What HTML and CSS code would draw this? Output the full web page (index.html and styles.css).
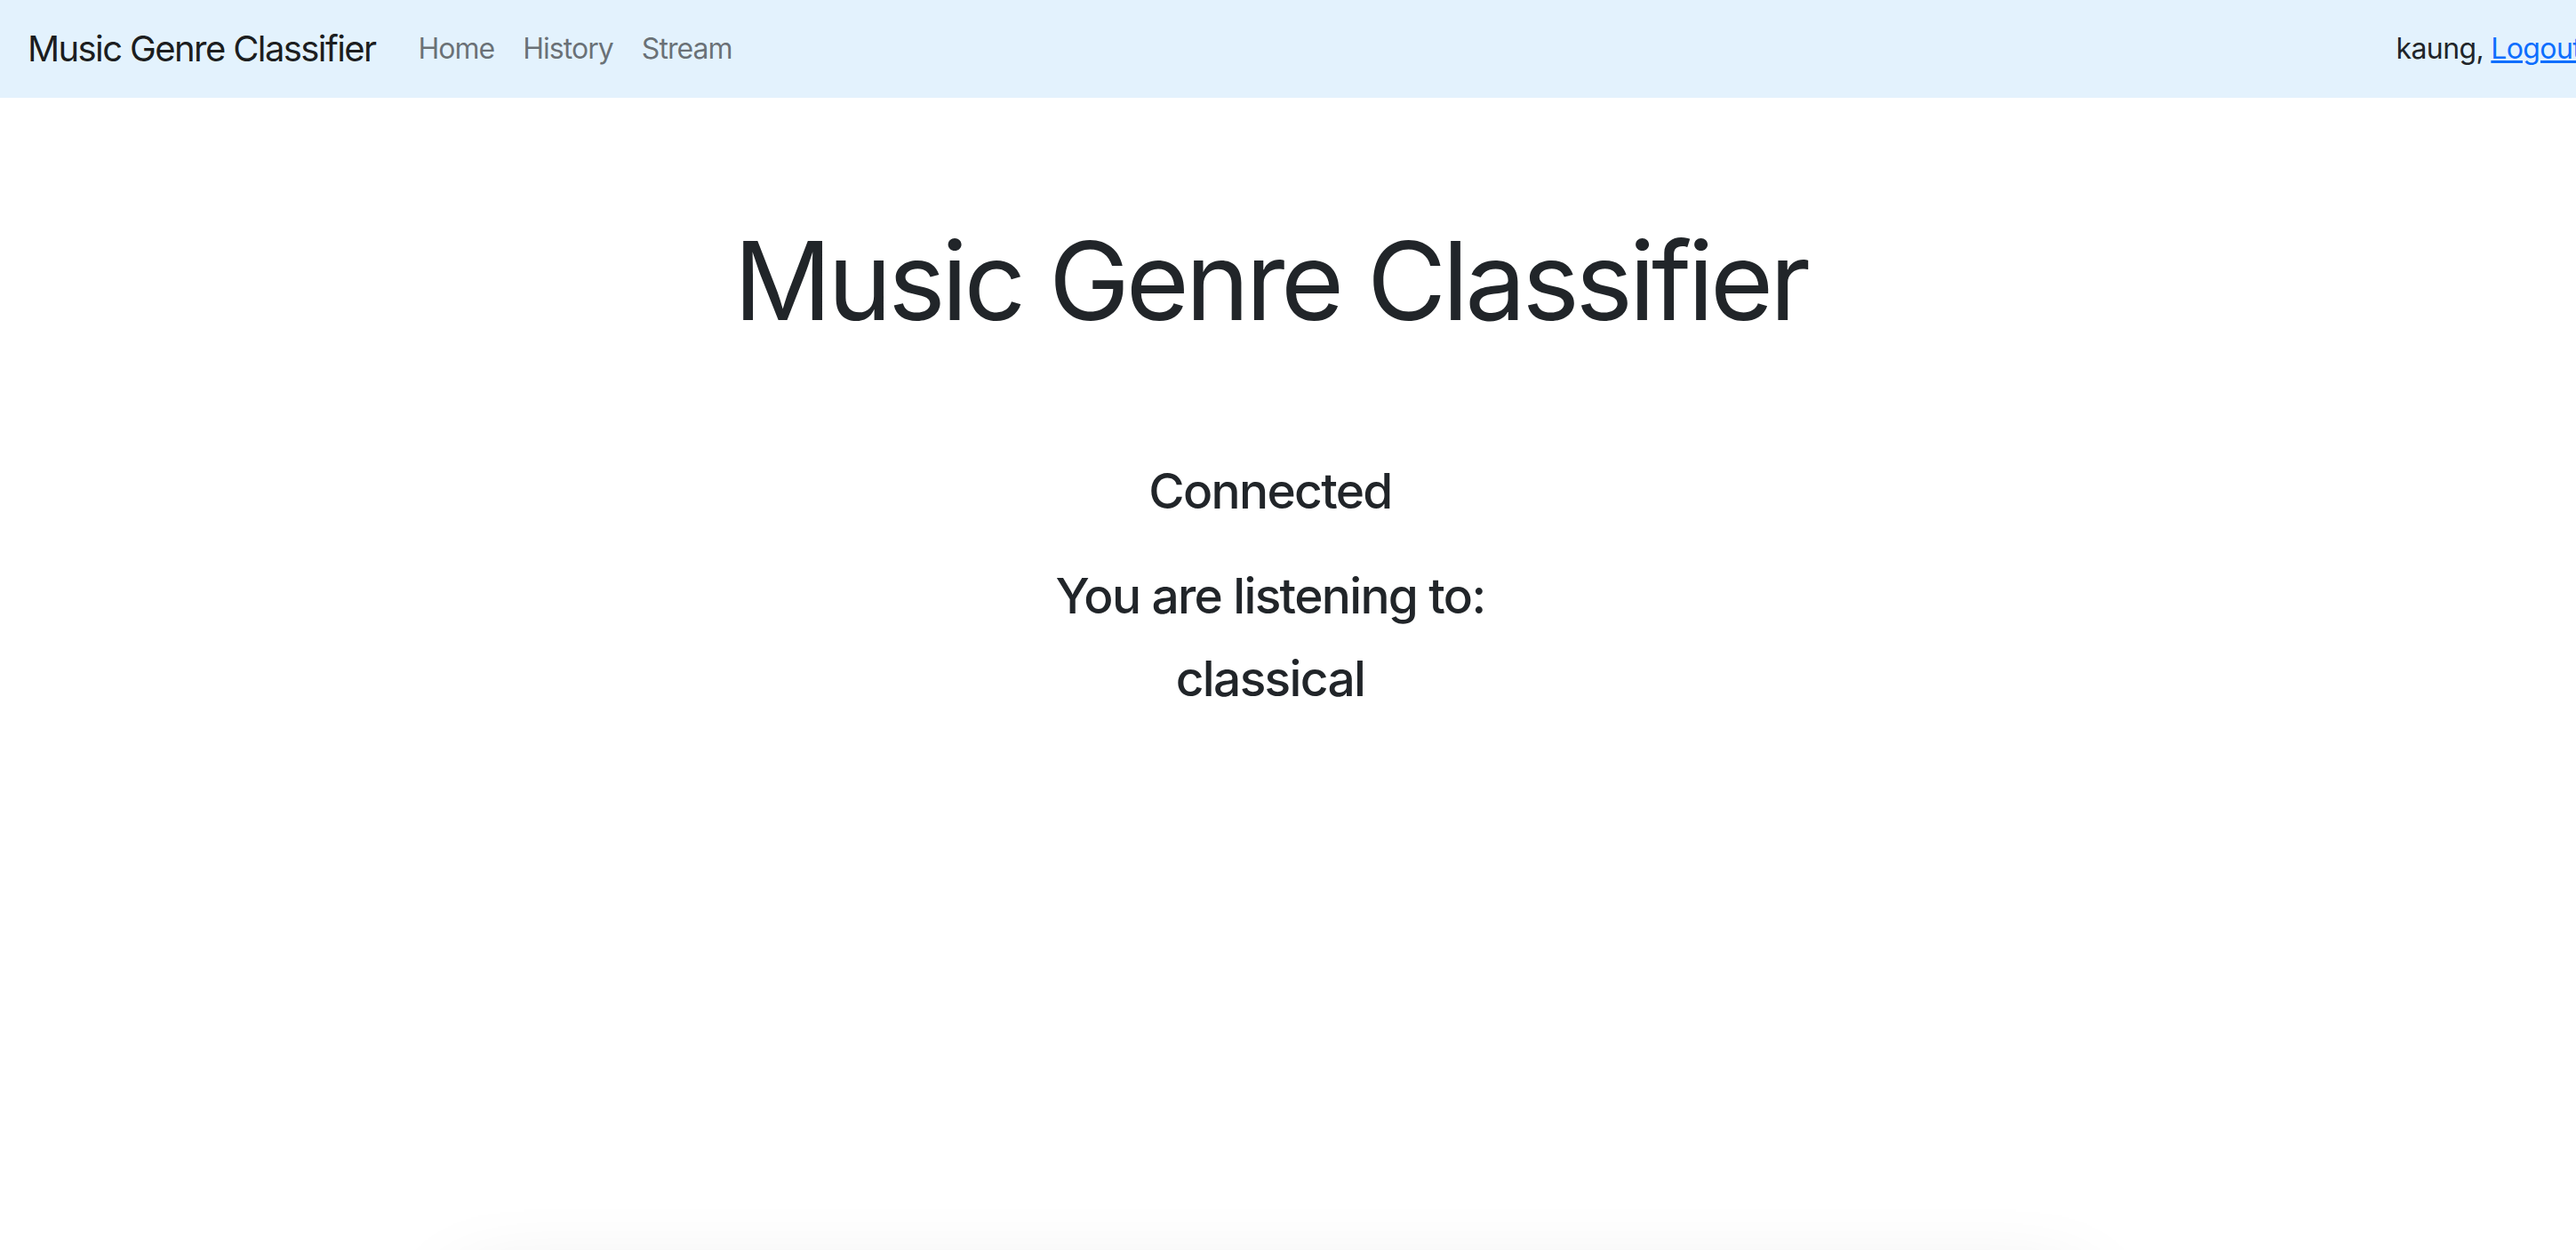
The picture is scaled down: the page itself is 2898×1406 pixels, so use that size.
FILE: index.html
```html
<!DOCTYPE html>
<html lang="en">
<head>
<meta charset="utf-8">
<title>Music Genre Classifier</title>
<link rel="stylesheet" href="styles.css">
</head>
<body>
<nav class="navbar">
  <a class="brand" href="#">Music Genre Classifier</a>
  <ul class="nav-links">
    <li><a class="nav-link" href="#">Home</a></li>
    <li><a class="nav-link" href="#">History</a></li>
    <li><a class="nav-link" href="#">Stream</a></li>
  </ul>
  <div class="user">kaung, <a class="logout" href="#">Logout</a></div>
</nav>
<main class="main">
  <h1 class="title">Music Genre Classifier</h1>
  <h3 class="status">Connected</h3>
  <h3 class="listening">You are listening to:</h3>
  <h3 class="genre">classical</h3>
  <div class="card"></div>
</main>
</body>
</html>
```

FILE: styles.css
```css
html, body {
  margin: 0;
  padding: 0;
  background: #ffffff;
  overflow-x: hidden;
}
body {
  font-family: Inter, "Noto Sans", "Liberation Sans", sans-serif;
  color: #212529;
}
.navbar {
  display: flex;
  align-items: center;
  box-sizing: border-box;
  height: 110px;
  padding: 0 0 0 31px;
  background: #e3f2fd;
  overflow: hidden;
}
.brand {
  font-size: 40px;
  line-height: 60px;
  letter-spacing: -0.04em;
  color: rgba(0, 0, 0, 0.9);
  text-decoration: none;
  margin-right: 32px;
  white-space: nowrap;
}
.nav-links {
  display: flex;
  list-style: none;
  margin: 0;
  padding: 0;
}
.nav-link {
  display: block;
  font-size: 32px;
  line-height: 48px;
  letter-spacing: -0.03em;
  padding: 0 16px;
  color: rgba(0, 0, 0, 0.55);
  text-decoration: none;
}
.user {
  margin-left: auto;
  margin-right: -6px;
  font-size: 32px;
  line-height: 48px;
  letter-spacing: -0.02em;
  color: #212529;
  white-space: nowrap;
  flex-shrink: 0;
}
.logout {
  color: #0d6efd;
  text-decoration: underline;
}
.main {
  padding-right: 40px;
  text-align: center;
}
.title {
  font-size: 122px;
  font-weight: 400;
  line-height: 1.2;
  letter-spacing: -0.035em;
  margin: 133px 0 0;
}
.status, .listening, .genre {
  font-size: 55px;
  font-weight: 500;
  line-height: 1.2;
  letter-spacing: -0.03em;
  margin: 0;
}
.status { margin-top: 130px; }
.listening { margin-top: 52px; }
.genre { margin-top: 27px; }
.card {
  width: 1820px;
  height: 300px;
  margin: 626px auto 0;
  background: #ffffff;
  box-shadow: 0 32px 96px rgba(0, 0, 0, 0.14);
}
```
